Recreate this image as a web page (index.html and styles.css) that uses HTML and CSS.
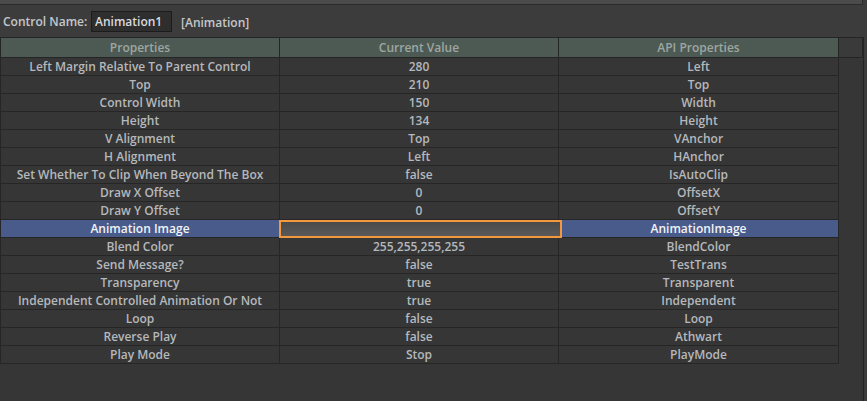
FILE: index.html
```html
<!DOCTYPE html>
<html lang="en">
<head>
    <meta charset="UTF-8">
    <title>Control Properties</title>
    <link rel="stylesheet" href="styles.css">
</head>
<body>
    <div class="topbar"></div>

    <div class="namebar">
        <label for="ctrl-name" class="name-label">Control Name:</label>
        <input type="text" id="ctrl-name" class="name-box" value="Animation1">
        <span class="ctrl-type">[Animation]</span>
    </div>

    <div class="grid-wrap">
        <table class="grid">
            <colgroup>
                <col class="c1"><col class="c2"><col class="c3">
            </colgroup>
            <thead>
                <tr>
                    <th>Properties</th>
                    <th>Current Value</th>
                    <th>API Properties</th>
                </tr>
            </thead>
            <tbody>
                <tr><td>Left Margin Relative To Parent Control</td><td>280</td><td>Left</td></tr>
                <tr><td>Top</td><td>210</td><td>Top</td></tr>
                <tr><td>Control Width</td><td>150</td><td>Width</td></tr>
                <tr><td>Height</td><td>134</td><td>Height</td></tr>
                <tr><td>V Alignment</td><td>Top</td><td>VAnchor</td></tr>
                <tr><td>H Alignment</td><td>Left</td><td>HAnchor</td></tr>
                <tr><td>Set Whether To Clip When Beyond The Box</td><td>false</td><td>IsAutoClip</td></tr>
                <tr><td>Draw X Offset</td><td>0</td><td>OffsetX</td></tr>
                <tr><td>Draw Y Offset</td><td>0</td><td>OffsetY</td></tr>
                <tr class="selected"><td>Animation Image</td><td class="editing"><div class="editor"></div></td><td>AnimationImage</td></tr>
                <tr><td>Blend Color</td><td>255,255,255,255</td><td>BlendColor</td></tr>
                <tr><td>Send Message?</td><td>false</td><td>TestTrans</td></tr>
                <tr><td>Transparency</td><td>true</td><td>Transparent</td></tr>
                <tr><td>Independent Controlled Animation Or Not</td><td>true</td><td>Independent</td></tr>
                <tr><td>Loop</td><td>false</td><td>Loop</td></tr>
                <tr><td>Reverse Play</td><td>false</td><td>Athwart</td></tr>
                <tr><td>Play Mode</td><td>Stop</td><td>PlayMode</td></tr>
            </tbody>
        </table>
        <div class="scroll-col">
            <div class="scroll-head"></div>
        </div>
    </div>
</body>
</html>
```

FILE: styles.css
```css
body{
    margin: 0;
    background: #3c3c3c;
    font-family: "Open Sans", "DejaVu Sans", sans-serif;
    font-size: 12px;
    font-weight: 600;
    color: #b5b8bc;
    overflow: hidden;
}
.topbar{
    width: 862px;
    height: 4px;
    background: #4b4b4b;
    border-bottom: 1px solid #2b2b2b;
    border-right: 1px solid #2b2b2b;
}
/* NAME ROW */
.namebar{
    display: flex;
    align-items: center;
    height: 32px;
    padding-left: 3px;
}
.name-label{
    color: #c4c7cb;
    width: 88px;
}
.name-box{
    box-sizing: border-box;
    width: 81px;
    height: 21px;
    margin: 0;
    padding: 0 3px;
    background: #2e2e2e;
    border: 1px solid #1c1c1c;
    color: #d8dade;
    font-family: inherit;
    font-size: 12px;
    font-weight: 600;
    outline: none;
}
.ctrl-type{
    margin-left: 9px;
    margin-top: 3px;
    color: #c4c7cb;
}
/* TABLE */
.grid-wrap{
    display: flex;
    width: 863px;
    height: 364px;
    background: #363636;
    border-right: 1px solid #242424;
}
.grid{
    width: 838px;
    height: 0;
    border-collapse: collapse;
    table-layout: fixed;
}
.c1{ width: 279px; }
.c2{ width: 279px; }
.c3{ width: 280px; }
.grid th{
    height: 19px;
    padding: 0;
    background: #4d5a53;
    color: #9ea6a2;
    font-weight: 600;
    border: 1px solid #252525;
}
.grid td{
    height: 17px;
    padding: 0;
    text-align: center;
    border: 1px solid #262626;
    line-height: 17px;
    white-space: nowrap;
}
.grid tr.selected td{
    background: #485b8b;
    color: #f2f3f5;
}
.grid td.editing{
    position: relative;
}
/* orange edit box sits over the cell */
.editor{
    position: absolute;
    left: -1px;
    top: 0;
    width: 283px;
    height: 18px;
    box-sizing: border-box;
    border: 2px solid #f2993d;
    background: linear-gradient(#4a4a4a, #595959);
}
.scroll-col{
    width: 25px;
}
.scroll-head{
    height: 19px;
    border: 1px solid #252525;
    border-left: none;
    background: #3a3a3a;
}
```
